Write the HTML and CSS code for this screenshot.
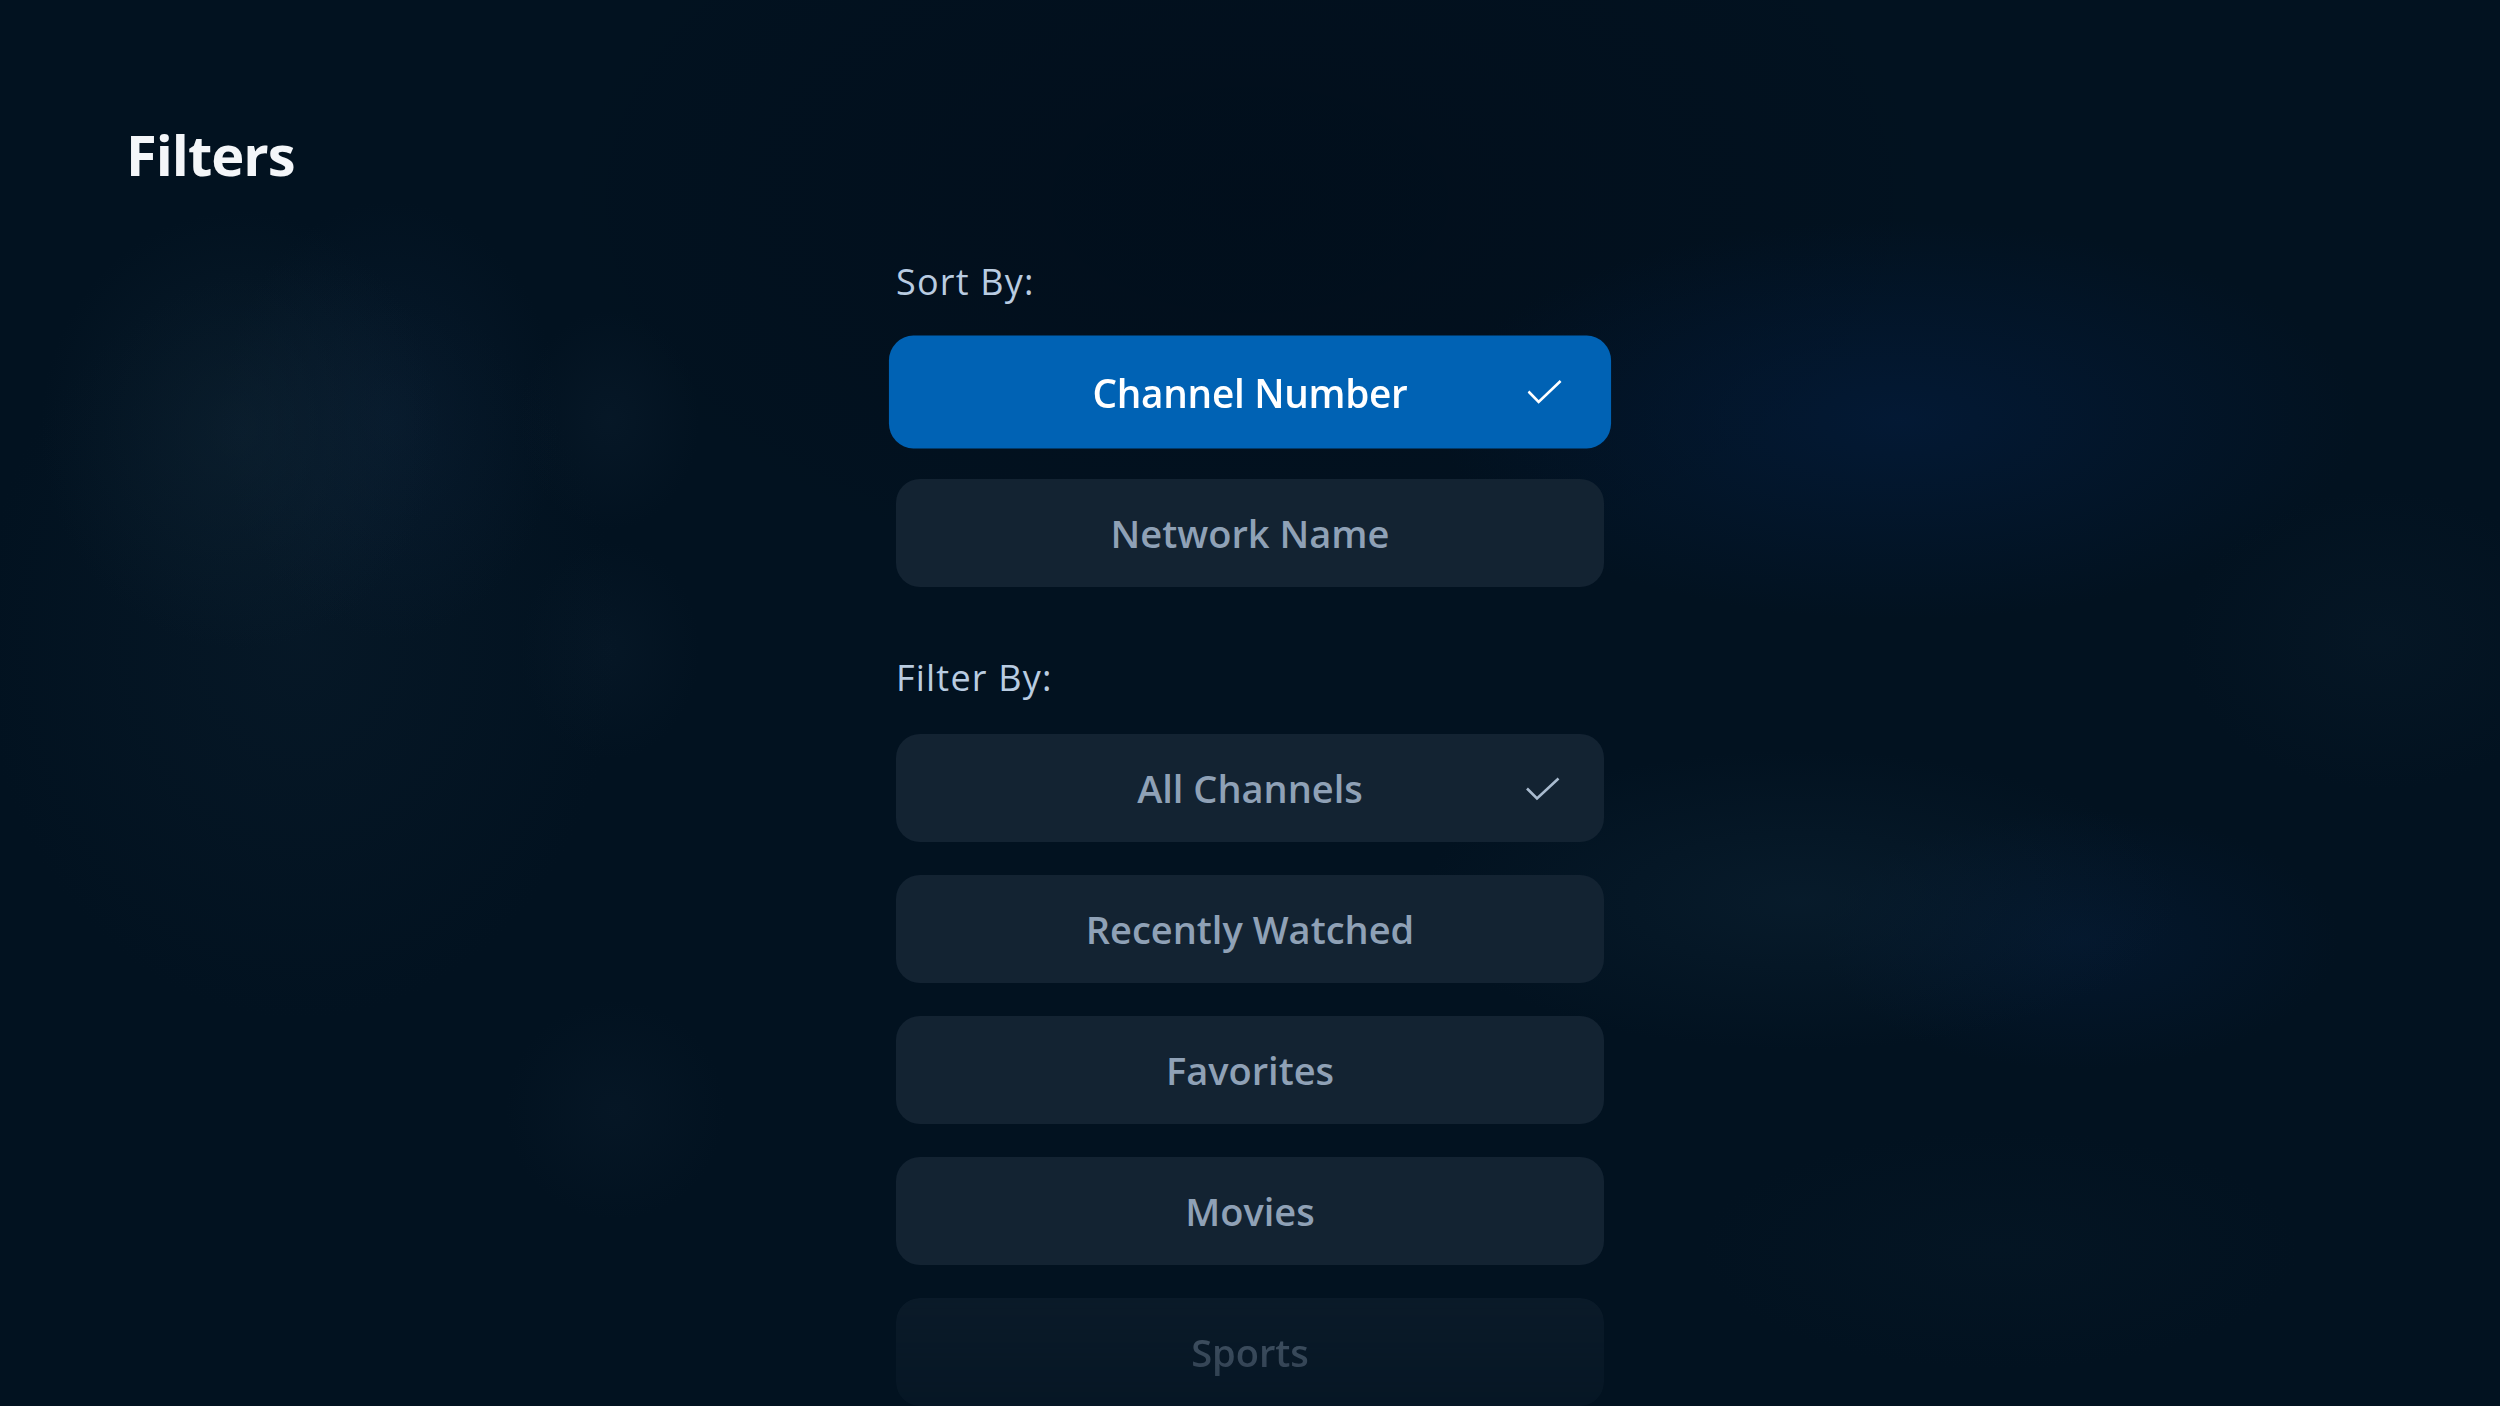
FILE: index.html
```html
<!DOCTYPE html>
<html lang="en">
<head>
  <meta charset="UTF-8"/>
  <meta name="viewport" content="width=device-width, initial-scale=1.0"/>
  <title>Filters</title>
  <link rel="stylesheet" href="styles.css">
</head>
<body>
  <div class="backdrop"></div>

  <h1 class="page-title">Filters</h1>

  <main class="filters">
    <section class="group">
      <h2 class="group-label">Sort By:</h2>
      <ul class="options">
        <li class="option focused">
          Channel Number
          <svg class="check" viewBox="0 0 34 24"><path d="M1 11.5 L11 21.5 L32.5 1.5"/></svg>
        </li>
        <li class="option">Network Name</li>
      </ul>
    </section>

    <section class="group">
      <h2 class="group-label">Filter By:</h2>
      <ul class="options">
        <li class="option">
          All Channels
          <svg class="check" viewBox="0 0 34 24"><path d="M1 11.5 L11 21.5 L32.5 1.5"/></svg>
        </li>
        <li class="option">Recently Watched</li>
        <li class="option">Favorites</li>
        <li class="option">Movies</li>
        <li class="option faded">Sports</li>
      </ul>
    </section>
  </main>
</body>
</html>
```

FILE: styles.css
```css
* {
  margin: 0;
  padding: 0;
  box-sizing: border-box;
}
body {
  width: 2500px;
  height: 1406px;
  overflow: hidden;
  background-color: #021220;
  color: #b9cce1;
  font-family: 'Open Sans', 'Noto Sans', sans-serif;
  position: relative;
}
.backdrop {
  position: absolute;
  inset: 0;
  z-index: 0;
  pointer-events: none;
  background:
    radial-gradient(ellipse 200px 220px at 240px 430px, rgba(18, 40, 56, 0.45), transparent),
    radial-gradient(ellipse 170px 220px at 390px 420px, rgba(14, 36, 60, 0.4), transparent),
    radial-gradient(ellipse 320px 380px at 300px 640px, rgba(12, 32, 48, 0.4), transparent),
    radial-gradient(ellipse 90px 110px at 610px 420px, rgba(16, 36, 54, 0.3), transparent),
    radial-gradient(ellipse 90px 110px at 610px 650px, rgba(16, 36, 54, 0.25), transparent),
    radial-gradient(ellipse 110px 110px at 615px 1110px, rgba(16, 36, 54, 0.25), transparent),
    radial-gradient(ellipse 460px 200px at 1900px 420px, rgba(4, 30, 66, 0.6), transparent),
    radial-gradient(ellipse 380px 150px at 1800px 900px, rgba(14, 38, 56, 0.45), transparent),
    radial-gradient(ellipse 260px 130px at 2080px 940px, rgba(6, 30, 62, 0.45), transparent),
    radial-gradient(ellipse 200px 150px at 2380px 640px, rgba(12, 32, 48, 0.3), transparent),
    radial-gradient(ellipse 300px 120px at 2000px 1250px, rgba(10, 30, 46, 0.25), transparent),
    radial-gradient(ellipse 700px 400px at 1250px 200px, rgba(0, 8, 20, 0.35), transparent);
}
.page-title {
  position: relative;
  z-index: 1;
  margin: 126px 0 0 126px;
  font-size: 56px;
  line-height: 56px;
  font-weight: 700;
  letter-spacing: -1px;
  color: #f4f6f9;
}
.filters {
  position: relative;
  z-index: 1;
  width: 708px;
  margin: 82px auto 0;
  display: flex;
  flex-direction: column;
  gap: 73px;
}
.group {
  display: flex;
  flex-direction: column;
  gap: 39px;
}
.group-label {
  font-size: 36px;
  line-height: 35px;
  font-weight: 400;
  letter-spacing: 1.2px;
  color: #b9cce1;
}
.options {
  list-style: none;
  display: flex;
  flex-direction: column;
  gap: 33px;
}
.option {
  position: relative;
  height: 108px;
  border-radius: 24px;
  background: #132332;
  color: #8fa1b6;
  font-size: 38px;
  font-weight: 600;
  display: flex;
  align-items: center;
  justify-content: center;
}
.option.focused {
  background: #0062b4;
  color: #ffffff;
  letter-spacing: -0.3px;
  transform: scale(1.02, 1.045);
}
.check {
  position: absolute;
  right: 44px;
  top: 50%;
  width: 34px;
  height: 24px;
  margin-top: -11px;
  fill: none;
  stroke: #a9bbcf;
  stroke-width: 2.6;
}
.option.focused .check {
  stroke: #ffffff;
  right: 48px;
  margin-top: -12px;
}
.option.faded {
  opacity: 0.5;
  -webkit-mask-image: linear-gradient(to bottom, #000 0%, rgba(0, 0, 0, 0.55) 100%);
  mask-image: linear-gradient(to bottom, #000 0%, rgba(0, 0, 0, 0.55) 100%);
}
```
